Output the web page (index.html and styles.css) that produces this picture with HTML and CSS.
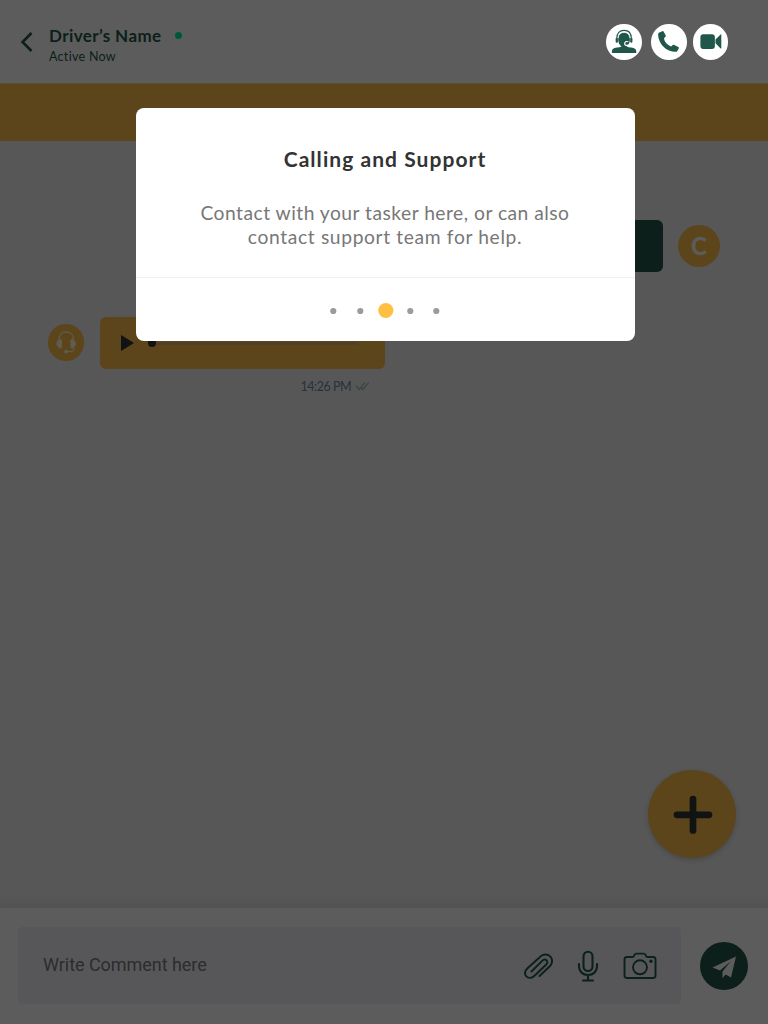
FILE: index.html
```html
<!DOCTYPE html>
<html lang="en">
<head>
<meta charset="utf-8">
<title>Driver chat</title>
<link rel="stylesheet" href="styles.css">
</head>
<body>
<div class="screen">
  <header class="header">
    <svg class="back" width="14" height="22" viewBox="0 0 14 22"><path d="M11.500 2 2.500 11l9 9" fill="none" stroke="#0c1f1a" stroke-width="2.500"/></svg>
    <div class="person">
      <div class="name-row"><span class="name">Driver’s Name</span><span class="online"></span></div>
      <span class="status">Active Now</span>
    </div>
    <nav class="actions">
      <span class="action support-action">
        <svg width="35.500" height="35.500" viewBox="0 0 36 36"><g fill="#20574a"><path d="M12.300 15c0-4 2-6.300 6-6.300s6 2.300 6 6.300c0 4-1.300 6-3.300 7.800v1.500h-5.400v-1.500c-2-1.800-3.300-3.800-3.300-7.800z"/><path d="M6 29.300v-1.500c0-2.300 1.700-3.500 4.800-3.900 2-.3 3.500-.4 4.500-1.200 1.700 1.400 4.300 1.400 6 0 1 .8 2.500.9 4.500 1.200 3.100.4 4.900 1.600 4.900 3.900v1.500z"/><rect x="9.800" y="14" width="2.300" height="5" rx="1"/><rect x="24.500" y="14" width="2.300" height="5" rx="1"/></g><path d="M11 14.500c0-5 2.900-8 7.300-8s7.300 3 7.300 8" fill="none" stroke="#20574a" stroke-width="1.200"/><path d="M12.300 14.500c.3-4 2.700-6 6-6s5.700 2 6 6" fill="none" stroke="#fff" stroke-width=".8"/><path d="M25 19c-.5 2-1.800 2.800-4 2.800M22.600 18c-2-.8-3.700.3-3.700 1.800s1.300 2.300 2.800 1.600" fill="none" stroke="#fff" stroke-width="1.200"/></svg>
      </span>
      <span class="action call-action">
        <svg width="35.500" height="35.500" viewBox="0 0 36 36"><path fill="#20574a" d="M8.500 8.500 11.500 7.300c.6-.2 1.100 0 1.400.6l1.900 3.600c.3.600.2 1.200-.3 1.600l-1.400 1.300c.5 4 3.300 6.800 7.200 8.300l1.900-1.400c.5-.4 1-.4 1.500-.1l4 2.200c.6.300.7.900.4 1.500l-1.400 2.400c-.4.600-.9.900-1.600.9C15.500 28.200 7.500 20.500 7.200 10.600c0-.9.400-1.700 1.300-2.100z"/></svg>
      </span>
      <span class="action video-action">
        <svg width="35.500" height="35.500" viewBox="0 0 36 36"><rect x="7.500" y="10.300" width="14.700" height="15" rx="3" fill="#20574a"/><path fill="#20574a" d="m22.800 15.800 5.200-5.200c.3-.3.700-.1.700.3v13.600c0 .4-.4.600-.7.300l-5.200-5.200z"/></svg>
      </span>
    </nav>
  </header>
  <div class="banner"></div>
  <main class="chat">
    <div class="row sent">
      <div class="bubble-sent"></div>
      <span class="avatar customer">C</span>
    </div>
    <div class="row received">
      <span class="avatar agent">
        <svg width="36.500" height="36.500" viewBox="0 0 37 37"><path d="M11 17c0-6 3-9 7.500-9s7.500 3 7.500 9" fill="none" stroke="#605c51" stroke-width="1.200"/><g fill="#605c51"><rect x="10.300" y="15.500" width="3.900" height="9" rx="1.300"/><rect x="22.800" y="15.500" width="3.900" height="9" rx="1.300"/><rect x="8.700" y="17.500" width="2" height="5" rx="1"/><rect x="26.300" y="17.500" width="2" height="5" rx="1"/><circle cx="18.400" cy="28" r="2"/></g><path d="M18.500 28h5c2 0 2.800-1.200 2.800-4" fill="none" stroke="#605c51" stroke-width="1.100"/></svg>
      </span>
      <div class="message">
        <div class="audio">
          <svg width="285" height="52" viewBox="0 0 285 52"><path d="M21 18v16l13-8z" fill="#101214"/><path d="M56 26.500h201" stroke="#49402d" stroke-width="2"/><circle cx="52" cy="26" r="4" fill="#101214"/></svg>
        </div>
        <div class="meta"><span class="time">14:26 PM</span><svg width="15" height="10" viewBox="0 0 15 10" fill="none" stroke="#3b4641" stroke-width="1.200"><path d="m.8 4.500 3.400 4L10 1.300M6.300 6.900l1.500 1.600 6-7.200"/></svg></div>
      </div>
    </div>
    <div class="add"><svg width="40" height="40" viewBox="0 0 40 40"><path d="M20 4v31.500M4 19.800h32" stroke="#111313" stroke-width="6.700" stroke-linecap="round"/></svg></div>
  </main>
  <footer class="composer">
    <div class="field">
      <span class="placeholder">Write Comment here</span>
      <div class="tools">
        <svg width="32" height="30" viewBox="0 0 32 30" fill="none" stroke="#0c211b" stroke-width="2" stroke-linecap="round"><path d="m18.500 25 10-9.500c3.200-3.200 3.400-7.400.7-10.100-2.700-2.600-7.200-2.400-10.200.5L6.500 17.200c-3 2.800-3.200 6.200-1.200 8.200 2.100 2.100 5.500 1.900 8.200-.7L25 13.800c1.500-1.500 1.700-3.300.6-4.400s-3-1-4.500.5L10.500 20.500"/></svg>
        <svg width="22" height="32" viewBox="0 0 22 32" fill="none" stroke="#0c211b" stroke-width="2.100" stroke-linecap="round"><rect x="6.500" y="1.700" width="9" height="19.300" rx="4.500"/><path d="M2 14v2.500c0 5 3.700 8.500 9 8.500s9-3.500 9-8.500V14M11 25v5M6 30.500h10"/></svg>
        <svg width="34" height="28" viewBox="0 0 34 28" fill="none" stroke="#0c211b" stroke-width="1.900"><path d="M4 5h5.500c1.300 0 1.300-.4 1.600-1.500.4-1.500.9-1.900 2.400-1.900h7c1.500 0 2 .4 2.400 1.900.3 1.100.3 1.500 1.600 1.500H30c1.500 0 2.500 1 2.500 2.500v16c0 1.500-1 2.500-2.500 2.500H4c-1.500 0-2.500-1-2.500-2.500v-16C1.500 6 2.500 5 4 5z"/><circle cx="17" cy="15.300" r="7"/><circle cx="28" cy="9.200" r="1.700" fill="#0c211b" stroke="none"/></svg>
      </div>
    </div>
    <span class="send"><svg width="48" height="48" viewBox="0 0 48 48"><path fill="#5c5c5c" d="M36 14.500 12.500 25.500l7.500 3 10.500-9-8 10v6.500l3.200-3.500 5.300 3z"/></svg></span>
  </footer>
  <section class="dialog">
    <div class="dialog-body">
      <h1 class="dialog-title">Calling and Support</h1>
      <p class="dialog-text"><span class="line-one">Contact with your tasker here, or can also</span><br><span class="line-two">contact support team for help.</span></p>
    </div>
    <div class="pager">
      <svg width="120" height="20" viewBox="0 0 120 20"><g fill="#9b9b9b"><circle cx="8.300" cy="10" r="3.100"/><circle cx="35.300" cy="10" r="3.100"/><circle cx="85.300" cy="10" r="3.100"/><circle cx="111.300" cy="10" r="3.100"/></g><circle cx="60.800" cy="9.500" r="7.600" fill="#ffbf43"/></svg>
    </div>
  </section>
</div>
</body>
</html>
```
FILE: styles.css
```css
* { box-sizing: border-box; }
body { margin: 0; font-family: Lato, sans-serif; }
svg { display: block; flex: none; }
.screen { position: relative; width: 768px; height: 1024px; display: flex; flex-direction: column; background: #575757; overflow: hidden; }
.header { height: 83px; flex: none; display: flex; padding-left: 20px; background: #5c5c5c; color: #0c1f1a; }
.back { margin-top: 31px; }
.person { margin: 25px 0 0 15px; }
.name-row { display: flex; align-items: center; height: 20px; }
.name { font-size: 17px; font-weight: 700; letter-spacing: .4px; white-space: nowrap; }
.online { width: 7px; height: 7px; border-radius: 50%; background: #00563b; margin-left: 13px; }
.status { display: block; font-size: 12.5px; line-height: 16px; margin-top: 4px; letter-spacing: .3px; }
.actions { display: flex; margin: 24px 40px 0 auto; height: 36px; }
.action { width: 35.5px; height: 35.5px; border-radius: 50%; background: #fff; }
.call-action { margin-left: 9.5px; }
.video-action { margin-left: 6px; }
.banner { height: 58px; flex: none; background: #5c451a; border-top: 1px solid #5a4e35; }
.chat { flex: 1; display: flex; flex-direction: column; }
.row { display: flex; }
.sent { margin-top: 79px; height: 52px; justify-content: flex-end; align-items: center; padding-right: 48px; gap: 15px; }
.bubble-sent { width: 285px; height: 52px; border-radius: 6px; background: #0c1f1a; }
.avatar { border-radius: 50%; background: #5c451a; flex: none; }
.customer { width: 42px; height: 42px; font-size: 24px; font-weight: 700; line-height: 41px; text-align: center; color: #5c5c5c; -webkit-text-stroke: .4px #5c5c5c; }
.received { margin: 45px 0 0 47.5px; gap: 16px; }
.agent { width: 36.5px; height: 36.5px; margin: 7px 0 0; }
.message { width: 285px; }
.audio { height: 52px; border-radius: 6px; background: #5c451a; }
.meta { display: flex; align-items: center; justify-content: flex-end; gap: 4px; padding-right: 15px; margin-top: 8px; height: 18px; color: #2b303b; }
.time { font-size: 12.5px; letter-spacing: -.5px; }
.add { width: 88px; height: 88px; margin: auto 32px 50px auto; border-radius: 50%; background: #5c451a; display: flex; align-items: center; justify-content: center; box-shadow: 0 2px 5px rgba(0,0,0,.18); padding: 1px 0 0 1px; }
.composer { height: 116px; flex: none; display: flex; align-items: center; padding: 0 20px 1px 18px; background: #5c5c5c; box-shadow: 0 -3px 12px rgba(0,0,0,.08); }
.field { width: 663px; height: 77px; border-radius: 5px; background: #575759; display: flex; align-items: center; justify-content: space-between; padding: 0 24px 0 25px; }
.placeholder { font: 18px Roboto, sans-serif; letter-spacing: -.04px; color: #2c2c2c; padding-bottom: 2px; }
.tools { display: flex; align-items: center; gap: 24px; }
.send { width: 48px; height: 48px; margin-left: 18.5px; border-radius: 50%; background: #0c1f1a; flex: none; }
.dialog { position: absolute; left: 135.5px; top: 108px; width: 499px; height: 233px; border-radius: 8px; background: #fff; text-align: center; }
.dialog-body { height: 170px; padding-top: 38px; border-bottom: 1px solid #f0f0f0; }
.dialog-title { margin: 0; font-size: 21px; line-height: 26px; font-weight: 700; letter-spacing: 1.05px; color: #333; }
.dialog-text { margin: 29px 0 0; font-size: 19.25px; line-height: 24px; color: #777; }
.line-one { letter-spacing: .48px; }
.line-two { letter-spacing: .63px; }
.pager { display: flex; justify-content: center; padding-top: 23px; }
```
